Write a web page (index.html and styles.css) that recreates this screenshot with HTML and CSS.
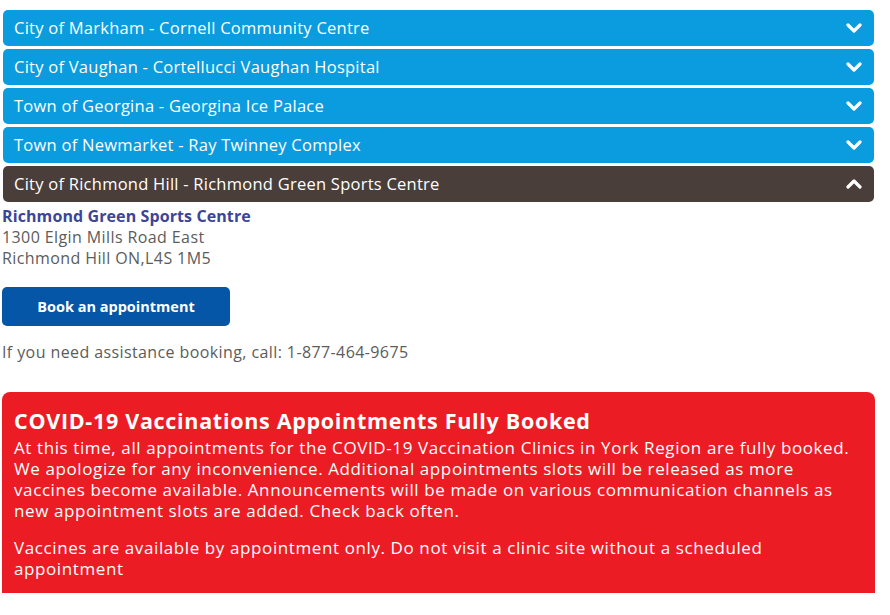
FILE: index.html
```html
<!DOCTYPE html>
<html lang="en">
<head>
<meta charset="utf-8">
<title>Vaccination Clinics</title>
<link rel="stylesheet" href="styles.css">
</head>
<body>
<div class="page">
  <div class="accordion">
    <div class="bar">
      <span class="bar-title">City of Markham - Cornell Community Centre</span>
      <svg class="chev" viewBox="0 0 16 10" width="16" height="10"><path d="M2 2 L8 8 L14 2" /></svg>
    </div>
    <div class="bar">
      <span class="bar-title">City of Vaughan - Cortellucci Vaughan Hospital</span>
      <svg class="chev" viewBox="0 0 16 10" width="16" height="10"><path d="M2 2 L8 8 L14 2" /></svg>
    </div>
    <div class="bar">
      <span class="bar-title">Town of Georgina - Georgina Ice Palace</span>
      <svg class="chev" viewBox="0 0 16 10" width="16" height="10"><path d="M2 2 L8 8 L14 2" /></svg>
    </div>
    <div class="bar">
      <span class="bar-title">Town of Newmarket - Ray Twinney Complex</span>
      <svg class="chev" viewBox="0 0 16 10" width="16" height="10"><path d="M2 2 L8 8 L14 2" /></svg>
    </div>
    <div class="bar bar-open">
      <span class="bar-title">City of Richmond Hill - Richmond Green Sports Centre</span>
      <svg class="chev" viewBox="0 0 16 10" width="16" height="10"><path d="M2 8 L8 2 L14 8" /></svg>
    </div>
  </div>

  <div class="details">
    <div class="venue">Richmond Green Sports Centre</div>
    <div class="addr">1300 Elgin Mills Road East</div>
    <div class="addr">Richmond Hill ON,L4S 1M5</div>
    <a class="book-btn" href="#">Book an appointment</a>
    <p class="assist">If you need assistance booking, call: 1-877-464-9675</p>
  </div>

  <div class="alert">
    <h2 class="alert-title">COVID-19 Vaccinations Appointments Fully Booked</h2>
    <p class="alert-text">At this time, all appointments for the COVID-19 Vaccination Clinics in York Region are fully booked. We apologize for any inconvenience. Additional appointments slots will be released as more vaccines become available. Announcements will be made on various communication channels as new appointment slots are added. Check back often.</p>
    <p class="alert-text alert-text-2">Vaccines are available by appointment only. Do not visit a clinic site without a scheduled appointment</p>
  </div>
</div>
</body>
</html>
```

FILE: styles.css
```css
* { box-sizing: border-box; }

html, body {
  margin: 0;
  padding: 0;
  background: #ffffff;
}

body {
  font-family: "Open Sans", "Liberation Sans", sans-serif;
}

.page {
  width: 875px;
  padding: 10px 0 0 2px;
}

.accordion {
  display: flex;
  flex-direction: column;
  gap: 3px;
  padding: 0 1px;
}

.bar {
  height: 36px;
  display: flex;
  align-items: center;
  justify-content: space-between;
  padding: 0 12px 0 11px;
  background: #0a9cde;
  border-radius: 5px;
  color: #ffffff;
}

.bar-open {
  background: #4a3e3a;
}

.bar-title {
  font-size: 16.5px;
  letter-spacing: 0.25px;
  line-height: 20px;
}

.chev {
  display: block;
  fill: none;
  stroke: #ffffff;
  stroke-width: 3.2;
  stroke-linecap: round;
  stroke-linejoin: round;
}

.details {
  padding-top: 4px;
  color: #5c5c5c;
  font-size: 16px;
  letter-spacing: 0.4px;
  line-height: 21px;
}

.venue {
  font-weight: 700;
  letter-spacing: 0.1px;
  color: #3d4595;
}

.book-btn {
  display: flex;
  align-items: center;
  justify-content: center;
  width: 228px;
  height: 39px;
  margin-top: 18px;
  background: #0556a6;
  border-radius: 5px;
  color: #ffffff;
  font-weight: 700;
  font-size: 14.5px;
  letter-spacing: 0;
  text-decoration: none;
}

.assist {
  margin: 16px 0 0 0;
}

.alert {
  margin-top: 29px;
  height: 201px;
  padding: 15px 12px 14px 12px;
  background: #ec1c24;
  border-radius: 8px 8px 0 0;
  color: #ffffff;
}

.alert-title {
  margin: 0;
  font-size: 21.5px;
  letter-spacing: 0.7px;
  line-height: 27px;
  font-weight: 700;
}

.alert-text {
  margin: 3px 0 0 0;
  font-size: 17px;
  letter-spacing: 0.6px;
  line-height: 21px;
}

.alert-text-2 {
  margin-top: 16px;
}
```
